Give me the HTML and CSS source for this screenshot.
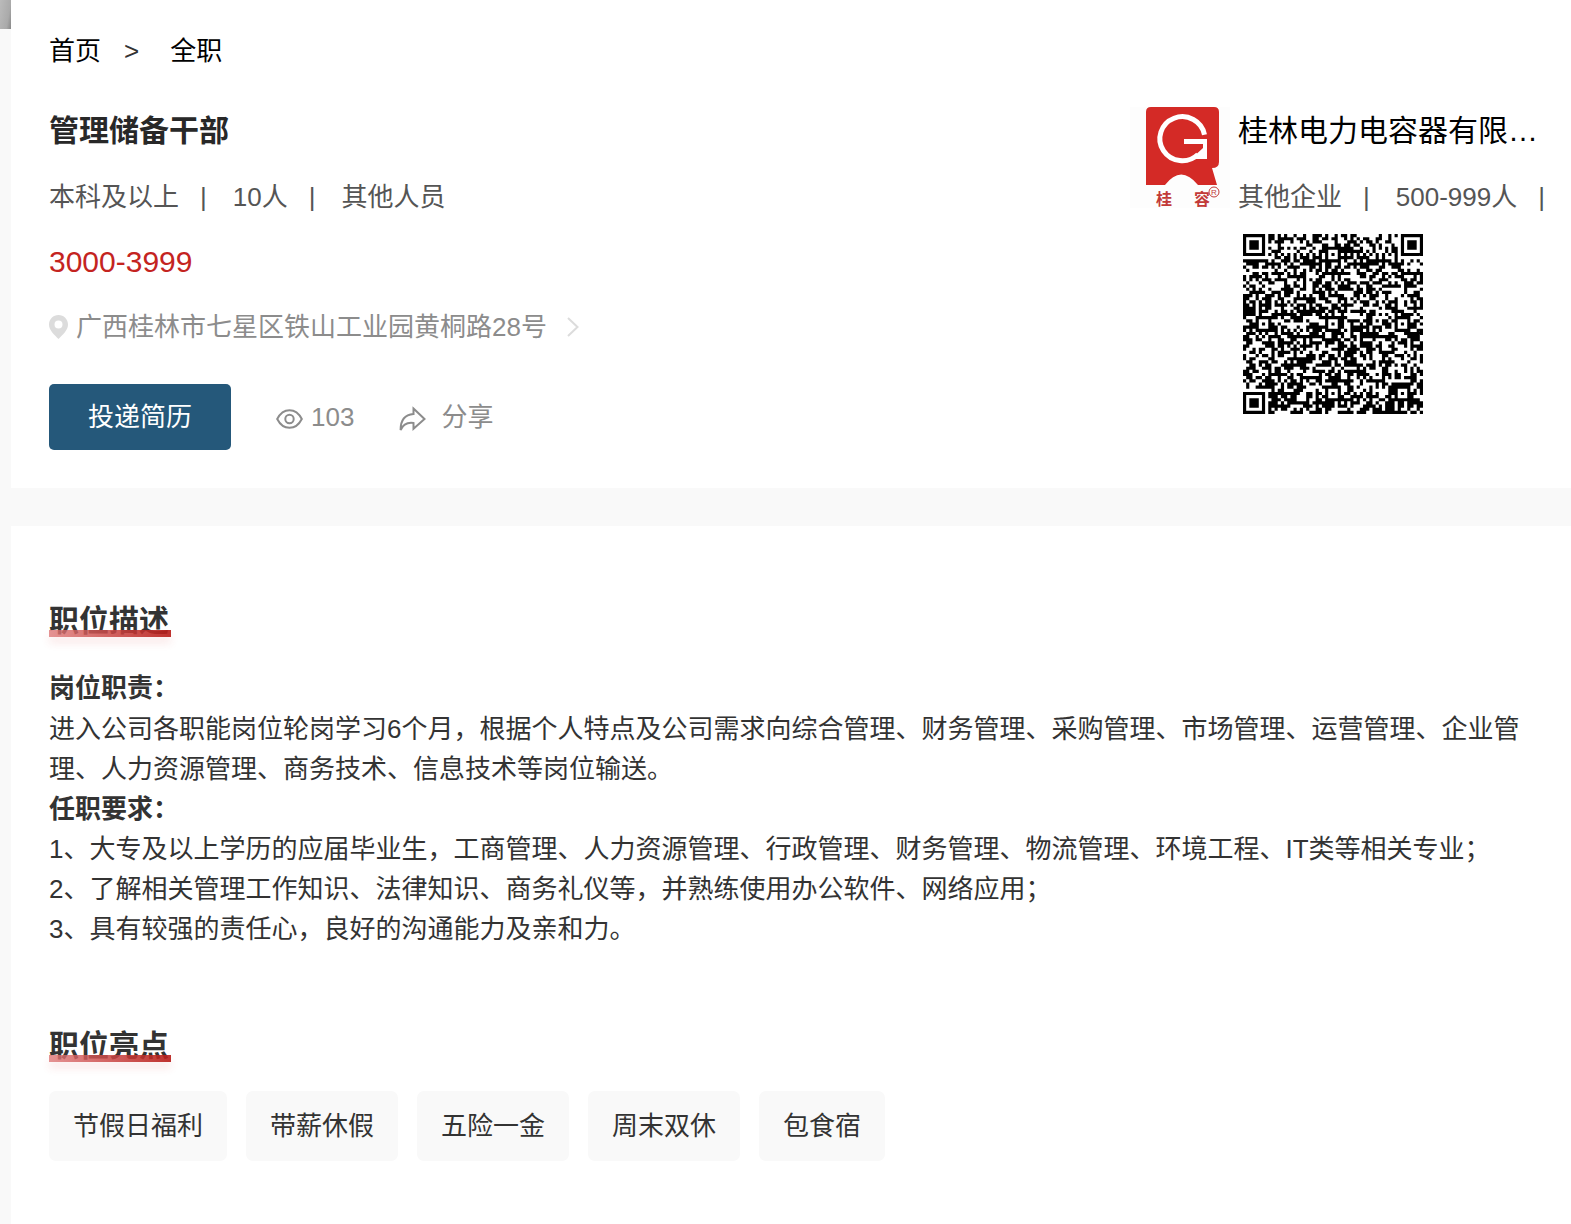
FILE: index.html
```html
<!DOCTYPE html>
<html lang="zh-CN">
<head>
    <meta charset="UTF-8">
    <meta name="viewport" content="width=device-width, initial-scale=1.0">
    <title>管理储备干部</title>

    <link rel="stylesheet" href="styles.css">
</head>
<body>
    <div class="side">
        <div class="side-img"></div>
    </div>
    <main class="page">
        <section class="card job">
            <nav class="crumb">
                <a href="#">首页</a>
                <span class="arrow">&gt;</span>
                <a href="#">全职</a>
            </nav>

            <div class="job-row">
                <div class="job-info">
                    <h1>管理储备干部</h1>
                    <div class="meta"><span>本科及以上</span><i>|</i><span>10人</span><i>|</i><span>其他人员</span></div>
                    <div class="salary">3000-3999</div>
                    <a class="address" href="#">
                        <svg class="pin" width="19" height="24" viewBox="0 0 19 24"><path fill="#dcdcdc" fill-rule="evenodd" d="M9.500 0C4.200 0 0 4.200 0 9.400c0 6 5.600 10.200 9.500 14.600C13.400 19.600 19 15.400 19 9.400 19 4.200 14.800 0 9.500 0zm0 5.600a4 4 0 1 1 0 8 4 4 0 0 1 0-8z"/></svg>
                        <span>广西桂林市七星区铁山工业园黄桐路28号</span>
                        <svg class="more" width="12" height="20" viewBox="0 0 12 20"><path fill="none" stroke="#dcdcdc" stroke-width="2" d="M1 1l9.500 9L1 19"/></svg>
                    </a>
                    <div class="actions">
                        <button type="button" class="apply">投递简历</button>
                        <span class="views">
                            <svg width="27" height="20" viewBox="0 0 27 20"><g fill="none" stroke="#8c8c8c" stroke-width="2"><path d="M1.200 10C4 4.500 8.400 1.200 13.500 1.200S23 4.500 25.800 10C23 15.500 18.600 18.800 13.500 18.800S4 15.500 1.200 10z"/><circle cx="13.500" cy="10" r="4.200"/></g></svg>
                            103
                        </span>
                        <a class="share" href="#">
                            <svg width="27" height="26" viewBox="0 0 27 26"><path fill="none" stroke="#8c8c8c" stroke-width="2" d="M14.500 2.500L25.500 13 14.500 22.800v-5.800C7.500 16 4 18.500 1.600 24 1.500 15 5.500 8.800 14.500 8z"/></svg>
                            分享
                        </a>
                    </div>
                </div>

                <aside class="company">
                    <svg class="logo" width="100" height="101" viewBox="0 0 100 101">
                        <rect width="100" height="101" fill="#fdfdfd"/>
                        <path fill="#d42a26" d="M21 0h63q5 0 5 5v50q0 6-7 6l5 17H68Q51 57 35 78H16V5q0-5 5-5z"/>
                        <path fill="none" stroke="#fff" stroke-width="5" d="M74.500 27.700A22.500 22 0 1 0 68 47.500"/>
                        <path fill="#fff" d="M54 32h23v20H61l12-11v-4H54z"/>
                        <text class="logo-text" x="26" y="98">桂</text>
                        <text class="logo-text" x="64" y="98">容</text>
                        <circle cx="84" cy="85" r="5" fill="none" stroke="#c23a38"/>
                        <text class="logo-mark" x="81" y="88">R</text>
                    </svg>
                    <div class="company-info">
                        <a class="company-name" href="#">桂林电力电容器有限…</a>
                        <div class="meta"><span>其他企业</span><i>|</i><span>500-999人</span><i>|</i></div>
                        <svg class="qr" id="qr" viewBox="0 0 57 57" role="img" aria-label="二维码"></svg>
                    </div>
                </aside>
            </div>
        </section>

        <section class="card detail">
            <h2>职位描述</h2>
            <div class="desc">
                <p><b>岗位职责：</b></p>
                <p>进入公司各职能岗位轮岗学习6个月，根据个人特点及公司需求向综合管理、财务管理、采购管理、市场管理、运营管理、企业管理、人力资源管理、商务技术、信息技术等岗位输送。</p>
                <p><b>任职要求：</b></p>
                <p>1、大专及以上学历的应届毕业生，工商管理、人力资源管理、行政管理、财务管理、物流管理、环境工程、IT类等相关专业；</p>
                <p>2、了解相关管理工作知识、法律知识、商务礼仪等，并熟练使用办公软件、网络应用；</p>
                <p>3、具有较强的责任心，良好的沟通能力及亲和力。</p>
            </div>

            <h2>职位亮点</h2>
            <ul class="tags">
                <li>节假日福利</li>
                <li>带薪休假</li>
                <li>五险一金</li>
                <li>周末双休</li>
                <li>包食宿</li>
            </ul>
        </section>
    </main>

    <script src="qr.js"></script>
</body>
</html>
```
FILE: styles.css
```css
*
{
    box-sizing: border-box;
}

body
{
    margin: 0;
    min-height: 100vh;
    display: flex;
    background: #f9f9f9;
    font-family: "Liberation Sans", "Noto Sans CJK SC", sans-serif;
    font-size: 26px;
    line-height: 40px;
    color: #333;
    overflow-x: hidden;
}

h1, h2, p, ul
{
    margin: 0;
    padding: 0;
}

a
{
    color: #000;
    text-decoration: none;
}

.side
{
    flex: 0 0 11px;
}

.side-img
{
    height: 29px;
    background: linear-gradient(100deg, #bbb, #aaa 70%, #888);
}

.page
{
    flex: 1;
    min-width: 0;
    display: flex;
    flex-direction: column;
    gap: 38px;
}

.card
{
    background: #fff;
    padding-left: 38px;
}

.job
{
    padding-top: 31px;
    padding-bottom: 38px;
}

.crumb
{
    display: flex;
    margin-bottom: 27px;
}

.arrow
{
    margin: 0 31px 0 23px;
}

.job-row
{
    display: flex;
}

.job-info
{
    flex: 1;
    min-width: 0;
}

h1
{
    font-size: 30px;
    line-height: 66px;
    color: #282828;
}

.meta
{
    line-height: 66px;
    color: #555;
    white-space: nowrap;
}

.meta i
{
    font-style: normal;
    margin: 0 26px 0 21px;
}

.salary
{
    font-size: 30px;
    line-height: 64px;
    color: #c4241f;
}

.address
{
    display: flex;
    align-items: center;
    line-height: 66px;
    color: #8c8c8c;
}

.pin
{
    margin-right: 8px;
}

.more
{
    margin-left: 20px;
}

.actions
{
    display: flex;
    align-items: center;
    margin-top: 24px;
    color: #8c8c8c;
}

.apply
{
    width: 182px;
    height: 66px;
    border: none;
    border-radius: 5px;
    background: #25587a;
    color: #fff;
    font: inherit;
}

.views, .share
{
    display: flex;
    align-items: center;
    color: #8c8c8c;
}

.views svg, .share svg
{
    margin-top: 4px;
}

.views
{
    gap: 8px;
    margin-left: 45px;
}

.share
{
    gap: 15px;
    margin-left: 45px;
}

.company
{
    flex: 0 0 440px;
    display: flex;
    gap: 8px;
}

.logo
{
    flex: none;
    margin-top: 9px;
}

.logo-text
{
    font-size: 16px;
    font-weight: bold;
    fill: #c23a38;
}

.logo-mark
{
    font-size: 8px;
    fill: #c23a38;
}

.company-info
{
    min-width: 0;
}

.company-name
{
    display: block;
    font-size: 30px;
    line-height: 66px;
    white-space: nowrap;
}

.qr
{
    display: block;
    width: 180px;
    height: 180px;
    margin: 4px 0 0 5px;
}

.detail
{
    flex: 1;
    padding: 72px 36px 64px 38px;
}

h2
{
    position: relative;
    width: max-content;
    padding-right: 2px;
    margin-bottom: 24px;
    font-size: 30px;
    line-height: 46px;
}

h2::after
{
    content: "";
    position: absolute;
    left: 0;
    right: 0;
    bottom: 7px;
    height: 7px;
    background: linear-gradient(90deg, rgba(222, 120, 120, 0.8), rgba(184, 28, 24, 0.9));
    box-shadow: 0 6px 8px rgba(217, 60, 60, 0.12);
}

.desc
{
    margin-bottom: 74px;
}

.desc p:first-child
{
    padding-bottom: 1px;
}

.tags
{
    display: flex;
    flex-wrap: wrap;
    gap: 19px;
    margin-top: -2px;
    list-style: none;
}

.tags li
{
    padding: 15px 24px;
    border-radius: 7px;
    background: #f9f9f9;
}
```
FILE: qr.js
```javascript
var size = 57;
var seed = 20;

function rand()
{
    seed = (seed * 1103515245 + 12345) % 2147483648;
    return seed / 2147483648;
}

var grid = [];
for (var y = 0; y < size; y++)
{
    grid.push([]);
    for (var x = 0; x < size; x++)
    {
        grid[y].push(rand() < 0.55);
    }
}

// timing lines
for (var i = 0; i < size; i++)
{
    grid[6][i] = i % 2 == 0;
    grid[i][6] = i % 2 == 0;
}

// square rings round a centre, dark[d] is the colour at distance d
function rings(cx, cy, r, dark)
{
    for (var y = cy - r; y <= cy + r; y++)
    {
        for (var x = cx - r; x <= cx + r; x++)
        {
            if (x < 0 || y < 0 || x >= size || y >= size) continue;
            var d = Math.max(Math.abs(x - cx), Math.abs(y - cy));
            grid[y][x] = dark[d];
        }
    }
}

var finder = [true, true, false, true, false];
rings(3, 3, 4, finder);
rings(size - 4, 3, 4, finder);
rings(3, size - 4, 4, finder);

var align = [true, false, true];
[[28, 6], [6, 28], [28, 28], [50, 28], [28, 50], [50, 50]].forEach(function (p)
{
    rings(p[0], p[1], 2, align);
});

var d = '';
for (var y = 0; y < size; y++)
{
    for (var x = 0; x < size; x++)
    {
        if (grid[y][x]) d += 'M' + x + ' ' + y + 'h1v1h-1z';
    }
}
var path = document.createElementNS('http://www.w3.org/2000/svg', 'path');
path.setAttribute('d', d);
document.getElementById('qr').appendChild(path);
```
